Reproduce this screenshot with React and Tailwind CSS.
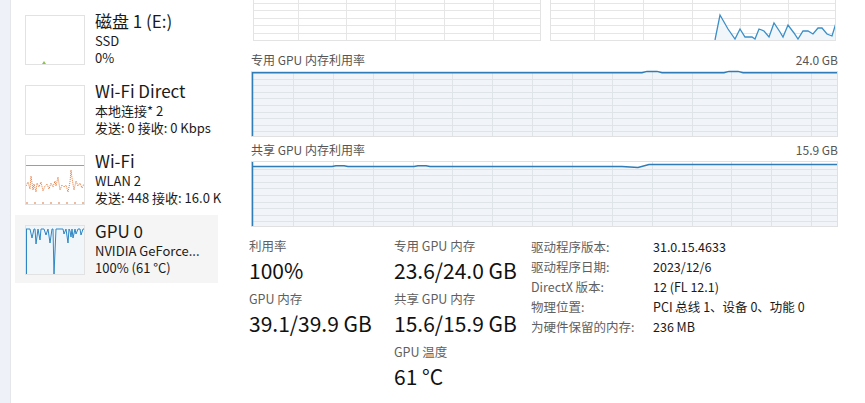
import React from 'react'

const font = { fontFamily: '"Noto Sans CJK SC", "Noto Sans", sans-serif' }

// grid chart drawn in svg
function Grid({ w, h, cols, rows, stroke = '#e6e6e6' }) {
  return (
    <g stroke={stroke} strokeWidth="1">
      {cols.map((x, i) => (
        <line key={'c' + i} x1={x} y1={0} x2={x} y2={h} />
      ))}
      {rows.map((y, i) => (
        <line key={'r' + i} x1={0} y1={y} x2={w} y2={y} />
      ))}
    </g>
  )
}

const smallRows = [3.5, 10.5, 18.5, 25.5, 33.5]
const smallColsL = [44.5, 92.5, 141.5, 190.5, 239.5]
const smallColsR = [43.5, 92.5, 141.5, 189.5, 237.5]

const gpuSpark = [
  [714, 40], [719, 15], [727, 29], [734, 39], [739, 29], [744, 37], [751, 37], [754, 39],
  [758, 29], [763, 31], [768, 37], [773, 23], [779, 32], [782, 37], [787, 25], [793, 33],
  [797, 39], [802, 31], [807, 31], [812, 34], [817, 28], [821, 28], [826, 34], [831, 36], [835, 23],
].map(([x, y]) => [x - 550, y])

function TopCharts() {
  const pts = gpuSpark.map(p => p.join(',')).join(' ')
  const fill = `${gpuSpark[0][0]},40 ${pts} ${gpuSpark[gpuSpark.length - 1][0]},40`
  return (
    <div className="flex gap-[9px] pl-[2px]">
      <div className="w-[288px] h-[41px] border-x border-b border-[#e3e3e3]">
        <svg width="286" height="40" className="block">
          <Grid w={286} h={40} cols={smallColsL} rows={smallRows} />
        </svg>
      </div>
      <div className="w-[286px] h-[41px] border-x border-b border-[#e3e3e3]">
        <svg width="284" height="40" className="block">
          <Grid w={284} h={40} cols={smallColsR} rows={smallRows} />
          <polygon points={fill} fill="#f1f6fa" />
          <polyline points={pts} fill="none" stroke="#3b8fc8" strokeWidth="1.3" />
        </svg>
      </div>
    </div>
  )
}

const bigCols = Array.from({ length: 14 }, (_, i) => Math.round(41 + i * 39.85) + 0.5)
const bigRows = Array.from({ length: 9 }, (_, i) => Math.round(6.6 * (i + 1)) + 0.5)

function BigChart({ line }) {
  const pts = line.map(p => p.join(',')).join(' ')
  return (
    <div className="h-[66px] border border-[#e0e0e0] bg-white">
      <svg width="585" height="64" className="block overflow-visible">
        <polygon points={`0,64 ${pts} 585,64`} fill="#f1f5f9" />
        <Grid w={585} h={64} cols={bigCols} rows={bigRows} stroke="#dfe4e8" />
        <line x1="0.5" y1="0" x2="0.5" y2="64" stroke="#2f7cb8" strokeWidth="1.5" />
        <polyline points={pts} fill="none" stroke="#2f7cb8" strokeWidth="1.5" />
      </svg>
    </div>
  )
}

const dedicatedLine = [
  [0, 0.8], [390, 0.8], [395, -0.6], [405, -0.6], [410, 0.8], [472, 0.8], [477, -0.6], [486, -0.6], [491, 0.8], [585, 0.8],
]
const sharedLine = [
  [0, 4.5], [80, 4.5], [84, 3.8], [92, 3.8], [96, 4.5], [162, 4.5], [166, 3.8], [174, 3.8], [178, 4.5],
  [370, 4.5], [386, 5.5], [397, 2.5], [585, 2.5],
]

function ChartLabel({ left, right }) {
  return (
    <div className="flex justify-between h-[16px] leading-[16px] text-[12px] text-[#555]">
      <span>{left}</span>
      <span>{right}</span>
    </div>
  )
}

function Thumb({ children, tint }) {
  return (
    <div className={`w-[60px] h-[50px] mt-[10px] shrink-0 border border-[#e2e2e2] ${tint ? 'bg-[#f1f6fa]' : 'bg-white'}`}>
      <svg width="58" height="48" className="block">{children}</svg>
    </div>
  )
}

const wifiDots = [
  [0, 30], [2, 26], [4, 33], [5, 20], [7, 34], [8, 28], [10, 36], [11, 27], [13, 31], [15, 26], [17, 35],
  [19, 30], [21, 28], [23, 33], [25, 27], [27, 31], [29, 25], [30, 30], [32, 21], [34, 34], [36, 29],
  [38, 31], [40, 29], [42, 36], [44, 26], [45, 14], [46, 22], [48, 34], [50, 25], [52, 30], [54, 27], [56, 32], [58, 28],
]

const gpuThumb = [
  [0, 3], [4, 3], [6, 12], [8, 3], [9, 3], [10, 18], [12, 3], [14, 14], [15, 3], [18, 3], [20, 9], [22, 3],
  [24, 17], [26, 3], [27, 3], [28, 48], [30, 3], [37, 3], [38, 8], [40, 3], [42, 17], [43, 3], [44, 5], [45, 11],
  [46, 3], [47, 12], [49, 3], [50, 8], [52, 3], [54, 3], [55, 9], [57, 3], [58, 3],
]

function SideItem({ title, l1, l2, thumb, selected }) {
  return (
    <div className={`flex h-[68px] pl-[10px] ${selected ? 'bg-[#f5f5f5]' : ''}`}>
      {thumb}
      <div className="pl-[10px] pt-[4px] whitespace-nowrap">
        <div className="text-[17px] leading-[23px] text-[#1a1a1a]">{title}</div>
        <div className="text-[13px] leading-[17px] text-[#1a1a1a]">{l1}</div>
        <div className="text-[13px] leading-[17px] text-[#1a1a1a]">{l2}</div>
      </div>
    </div>
  )
}

function Sidebar() {
  return (
    <div className="w-[209px] shrink-0 pt-[5px] pl-[4px] pr-[2px] flex flex-col gap-[2px]">
      <SideItem
        title="磁盘 1 (E:)"
        l1="SSD"
        l2="0%"
        thumb={
          <Thumb>
            <polygon points="16,48 18,45 20,48" fill="#8bc34a" />
          </Thumb>
        }
      />
      <SideItem title="Wi-Fi Direct" l1="本地连接* 2" l2="发送: 0 接收: 0 Kbps" thumb={<Thumb />} />
      <SideItem
        title="Wi-Fi"
        l1="WLAN 2"
        l2="发送: 448 接收: 16.0 K"
        thumb={
          <Thumb>
            <line x1="0" y1="9.5" x2="58" y2="9.5" stroke="#e08a4e" strokeWidth="1" />
            <polyline
              points={wifiDots.map(p => p.join(',')).join(' ')}
              fill="none"
              stroke="#e0783a"
              strokeWidth="1"
              strokeDasharray="1 1"
            />
            <line x1="0" y1="47" x2="58" y2="47" stroke="#e0783a" strokeWidth="1" strokeDasharray="2 6" />
          </Thumb>
        }
      />
      <SideItem
        title="GPU 0"
        l1="NVIDIA GeForce..."
        l2="100% (61 °C)"
        selected
        thumb={
          <Thumb tint>
            <line x1="0.5" y1="3" x2="0.5" y2="48" stroke="#2f86c4" strokeWidth="1" />
            <polyline points={gpuThumb.map(p => p.join(',')).join(' ')} fill="none" stroke="#2f86c4" strokeWidth="1" />
          </Thumb>
        }
      />
    </div>
  )
}

function Stat({ label, value }) {
  return (
    <div className="mb-[8px]">
      <div className="text-[12.5px] leading-[16px] text-[#5f5f5f]">{label}</div>
      <div className="mt-[3px] text-[21px] leading-[26px] text-[#111]">{value}</div>
    </div>
  )
}

const info = [
  ['驱动程序版本:', '31.0.15.4633'],
  ['驱动程序日期:', '2023/12/6'],
  ['DirectX 版本:', '12 (FL 12.1)'],
  ['物理位置:', 'PCI 总线 1、设备 0、功能 0'],
  ['为硬件保留的内存:', '236 MB'],
]

export default function App() {
  return (
    <div className="flex w-[865px] h-[403px] overflow-hidden bg-white" style={font}>
      <div className="w-[11px] shrink-0 bg-[#eef2f8] border-r border-[#e4e6ea]" />
      <Sidebar />
      <div className="flex-1 pl-[31px] pr-[27px]">
        <TopCharts />
        <div className="mt-[11px]">
          <ChartLabel left="专用 GPU 内存利用率" right="24.0 GB" />
        </div>
        <div className="mt-[3px]">
          <BigChart line={dedicatedLine} />
        </div>
        <div className="mt-[5px]">
          <ChartLabel left="共享 GPU 内存利用率" right="15.9 GB" />
        </div>
        <div className="mt-[3px]">
          <BigChart line={sharedLine} />
        </div>
        <div className="flex mt-[11px] -ml-[2px] whitespace-nowrap">
          <div className="w-[145px]">
            <Stat label="利用率" value="100%" />
            <Stat label="GPU 内存" value="39.1/39.9 GB" />
          </div>
          <div className="w-[137px]">
            <Stat label="专用 GPU 内存" value="23.6/24.0 GB" />
            <Stat label="共享 GPU 内存" value="15.6/15.9 GB" />
            <Stat label="GPU 温度" value="61 °C" />
          </div>
          <div className="-mt-[1px]">
            {info.map(([k, v]) => (
              <div key={k} className="flex h-[20px] leading-[20px] text-[12.5px]">
                <span className="w-[122px] text-[#5f5f5f]">{k}</span>
                <span className="text-[#1a1a1a]">{v}</span>
              </div>
            ))}
          </div>
        </div>
      </div>
    </div>
  )
}
